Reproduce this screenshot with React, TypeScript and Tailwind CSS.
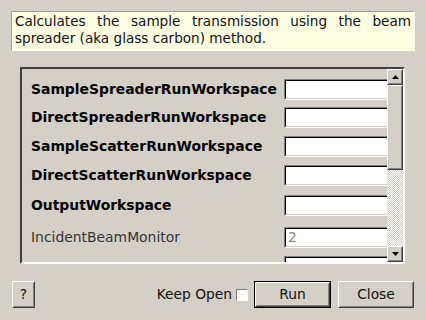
import { ReactNode } from 'react';

interface Row {
  label: string;
  bold: boolean;
  value?: string;
  space: string;
  shift?: string;
}

const rows: Row[] = [
  { label: 'SampleSpreaderRunWorkspace', bold: true, space: 'mt-[10px]' },
  { label: 'DirectSpreaderRunWorkspace', bold: true, space: 'mt-[7px]' },
  { label: 'SampleScatterRunWorkspace', bold: true, space: 'mt-[8px]' },
  { label: 'DirectScatterRunWorkspace', bold: true, space: 'mt-[8px]' },
  { label: 'OutputWorkspace', bold: true, space: 'mt-[9px]' },
  { label: 'IncidentBeamMonitor', bold: false, value: '2', space: 'mt-[11px]' },
  { label: 'TransmissionMonitor', bold: false, space: 'mt-[8px]', shift: 'mt-[7px]' },
];

function Raised({ children, className = '' }: { children?: ReactNode; className?: string }) {
  return (
    <div className={`border border-t-white border-l-white border-r-[#404040] border-b-[#404040] bg-[#d4d0c8] ${className}`}>
      <div className="w-full h-full border border-transparent border-r-[#808080] border-b-[#808080] flex items-center justify-center">
        {children}
      </div>
    </div>
  );
}

function Arrow({ down }: { down?: boolean }) {
  return (
    <svg width="7" height="4" viewBox="0 0 7 4">
      <polygon points={down ? '0,0 7,0 3.5,4' : '0,4 7,4 3.5,0'} fill="#000" />
    </svg>
  );
}

export default function App() {
  return (
    <div className="w-[426px] h-[320px] bg-[#d4d0c8] flex flex-col text-[13.8px] text-[#111] font-['DejaVu_Sans',sans-serif] overflow-hidden">
      <div className="mx-[11px] mt-[11px] h-[40px] bg-[#ffffe1] border border-t-[#a0a0a0] border-l-[#a0a0a0] border-r-white border-b-white px-[3px] pt-[1px] leading-[17px] text-justify text-[13.6px]">
        Calculates the sample transmission using the beam spreader (aka glass carbon) method.
      </div>

      <div className="ml-[20px] mr-[21px] mt-[16px] h-[197px] border-2 border-t-[#404040] border-l-[#404040] border-r-white border-b-white flex">
        <div className="flex-1 overflow-hidden">
          {rows.map((row) => (
            <div key={row.label} className={`${row.space} flex items-center h-[21px] pl-[9px]`}>
              <div className={`w-[253px] shrink-0 text-[13.9px] ${row.shift ?? ''} ${row.bold ? 'font-bold text-black' : 'text-[#333]'}`}>{row.label}</div>
              <div className="w-[130px] h-[21px] shrink-0 bg-white border border-t-[#808080] border-l-[#808080] border-r-white border-b-white">
                <div className="h-full border border-t-black border-l-black border-r-[#d4d0c8] border-b-[#d4d0c8] pl-[2px] leading-[17px] text-[#8a8a8a]">
                  {row.value}
                </div>
              </div>
            </div>
          ))}
        </div>
        <div className="w-[16px] shrink-0 flex flex-col">
          <Raised className="h-[16px]">
            <Arrow />
          </Raised>
          <Raised className="h-[85px]" />
          <div className="flex-1 bg-[repeating-conic-gradient(#ffffff_0_25%,#d4d0c8_0_50%)] bg-[length:2px_2px]" />
          <Raised className="h-[16px]">
            <Arrow down />
          </Raised>
        </div>
      </div>

      <div className="mt-[17px] mx-[12px] flex items-center h-[27px]">
        <Raised className="w-[23px] h-[27px]">?</Raised>
        <div className="flex-1" />
        <span className="mr-[4px]">Keep Open</span>
        <div className="w-[12px] h-[12px] bg-white border border-t-[#808080] border-l-[#808080] border-r-white border-b-white mr-[6px]" />
        <div className="border border-black">
          <Raised className="w-[75px] h-[25px]">Run</Raised>
        </div>
        <Raised className="w-[76px] h-[27px] ml-[7px]">Close</Raised>
      </div>
    </div>
  );
}
